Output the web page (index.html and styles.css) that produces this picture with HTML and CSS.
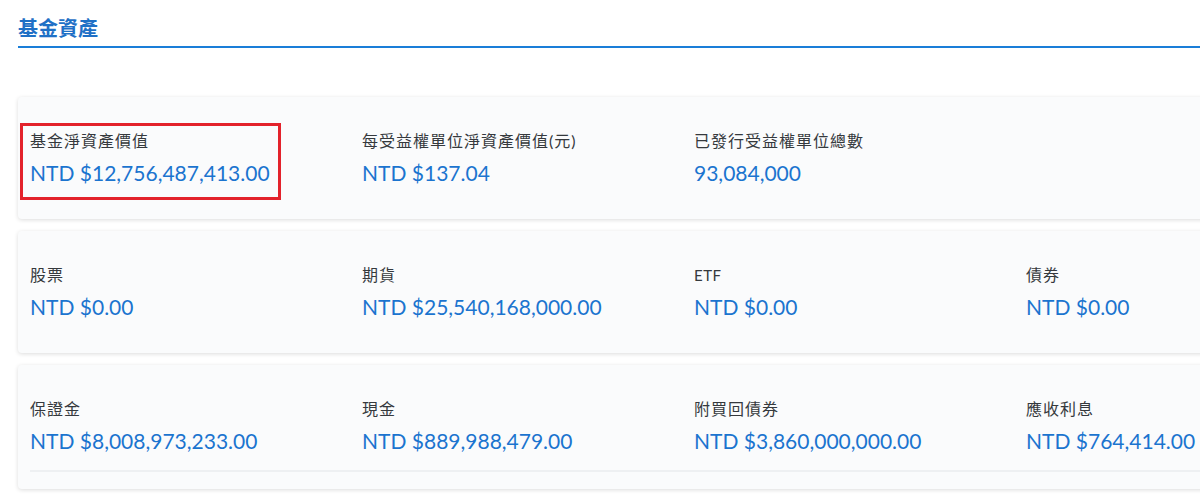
FILE: index.html
```html
<!DOCTYPE html>
<html>
<head>
    <meta charset="utf-8">
    <title>基金資產</title>
    <link rel="stylesheet" href="styles.css">
</head>
<body>

<div class="fund">
    <h2 class="fund-title">基金資產</h2>

    <div class="card">
        <div class="item marked">
            <div class="label">基金淨資產價值</div>
            <div class="value">NTD $12,756,487,413.00</div>
        </div>
        <div class="item">
            <div class="label">每受益權單位淨資產價值(元)</div>
            <div class="value">NTD $137.04</div>
        </div>
        <div class="item">
            <div class="label">已發行受益權單位總數</div>
            <div class="value">93,084,000</div>
        </div>
    </div>

    <div class="card">
        <div class="item">
            <div class="label">股票</div>
            <div class="value">NTD $0.00</div>
        </div>
        <div class="item">
            <div class="label">期貨</div>
            <div class="value">NTD $25,540,168,000.00</div>
        </div>
        <div class="item">
            <div class="label latin">ETF</div>
            <div class="value">NTD $0.00</div>
        </div>
        <div class="item">
            <div class="label">債券</div>
            <div class="value">NTD $0.00</div>
        </div>
    </div>

    <div class="card last">
        <div class="item">
            <div class="label">保證金</div>
            <div class="value">NTD $8,008,973,233.00</div>
        </div>
        <div class="item">
            <div class="label">現金</div>
            <div class="value">NTD $889,988,479.00</div>
        </div>
        <div class="item">
            <div class="label">附買回債券</div>
            <div class="value">NTD $3,860,000,000.00</div>
        </div>
        <div class="item">
            <div class="label">應收利息</div>
            <div class="value">NTD $764,414.00</div>
        </div>
        <div class="divider"></div>
    </div>
</div>

</body>
</html>
```

FILE: styles.css
```css
body {
    font-family: Lato, "Noto Sans CJK TC", sans-serif;
    margin: 0;
    padding: 0;
    background-color: #fff;
    overflow: hidden;
}
.fund {
    width: 1360px;
    padding-left: 18px;
}
.fund-title {
    margin: 14px 0 49px 0;
    padding-bottom: 4px;
    font-size: 20px;
    line-height: 28px;
    font-weight: bold;
    color: #1f70c6;
    border-bottom: 2px solid #1a7ed8;
}
.card {
    display: grid;
    grid-template-columns: repeat(4, 332px);
    padding: 26px 0 19px 2px;
    margin-bottom: 12px;
    background-color: #fafbfc;
    border-radius: 4px;
    box-shadow: 0 1px 4px rgba(0, 0, 0, 0.14);
}
.card.last {
    padding-bottom: 17px;
}
.item {
    border: 3px solid transparent;
    padding: 4px 7px 10px 7px;
}
/* 重點標示 */
.item.marked {
    justify-self: start;
    width: 241px;
    border-color: #e3222b;
}
.label {
    font-size: 16px;
    letter-spacing: 1px;
    line-height: 22px;
    color: #35393d;
    margin-bottom: 7px;
}
.label.latin {
    font-size: 15px;
    letter-spacing: 0.5px;
}
.value {
    font-size: 21px;
    line-height: 28px;
    color: #1b74cf;
}
.divider {
    grid-column: 1 / -1;
    margin: 2px 0 0 10px;
    height: 2px;
    background-color: #eef0f2;
}
```
